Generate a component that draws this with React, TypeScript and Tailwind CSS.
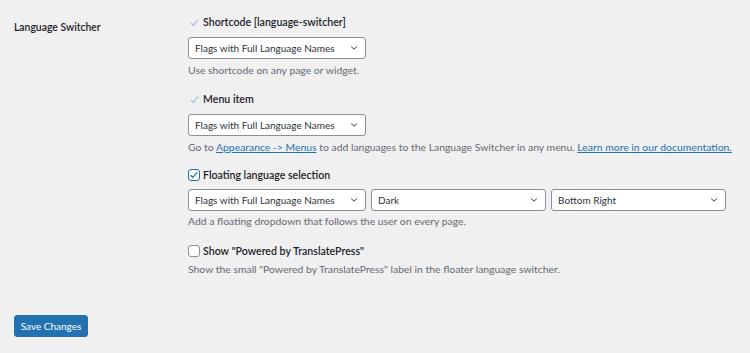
import { ChevronDown } from "lucide-react";

const font = { fontFamily: 'Lato, "Noto Sans", sans-serif' };

function Select({ value, width }: { value: string; width: string }) {
    return (
        <div className={`${width} shrink-0 h-[22px] bg-white border border-[#8c8f94] rounded-[3px] flex items-center justify-between pl-[6px] pr-[6px] text-[10px] text-[#2c3338] whitespace-nowrap`}>
            <span>{value}</span>
            <ChevronDown className="w-[10px] h-[10px] text-[#50575e]" strokeWidth={2.5} />
        </div>
    );
}

function Check({ state }: { state: "disabled" | "checked" | "empty" }) {
    if (state === "disabled") {
        return (
            <span className="w-[12px] h-[12px] flex items-center justify-center">
                <svg viewBox="0 0 12 12" className="w-[11px] h-[11px]">
                    <path d="M2 6.5 L4.6 9.2 L10 2.6" fill="none" stroke="#a7c4de" strokeWidth="1.5" />
                </svg>
            </span>
        );
    }
    return (
        <span className={`w-[12px] h-[12px] rounded-[3px] bg-white border flex items-center justify-center ${state === "checked" ? "border-[#2271b1]" : "border-[#8c8f94]"}`}>
            {state === "checked" && (
                <svg viewBox="0 0 12 12" className="w-[10px] h-[10px]">
                    <path d="M2 6.2 L4.6 8.8 L10 2.8" fill="none" stroke="#2271b1" strokeWidth="1.6" />
                </svg>
            )}
        </span>
    );
}

export default function App() {
    return (
        <div style={font} className="w-[750px] h-[353px] bg-[#f0f0f1] text-[#1d2327] text-[10.4px] leading-[14px] flex flex-col px-[14px] whitespace-nowrap">
            <div className="flex pt-[14px]">
                <div className="w-[174px] shrink-0 pt-[6px] font-semibold">Language Switcher</div>

                <div className="flex flex-col">
                    {/* Shortcode */}
                    <div className="mt-[1px] flex items-center gap-[3px] h-[14px] font-semibold text-[10.6px]">
                        <Check state="disabled" />
                        <span>Shortcode [language-switcher]</span>
                    </div>
                    <div className="mt-[8px]"><Select value="Flags with Full Language Names" width="w-[178px]" /></div>
                    <div className="mt-[4px] text-[#646970]">Use shortcode on any page or widget.</div>

                    {/* Menu item */}
                    <div className="mt-[15px] flex items-center gap-[3px] h-[14px] font-semibold text-[10.6px]">
                        <Check state="disabled" />
                        <span>Menu item</span>
                    </div>
                    <div className="mt-[8px]"><Select value="Flags with Full Language Names" width="w-[178px]" /></div>
                    <div className="mt-[4px] text-[#646970]">
                        Go to <a className="text-[#2271b1] underline">Appearance -&gt; Menus</a> to add languages to the Language Switcher in any menu.{" "}
                        <a className="text-[#2271b1] underline">Learn more in our documentation.</a>
                    </div>

                    {/* Floating */}
                    <div className="mt-[14px] flex items-center gap-[3px] h-[14px] font-semibold text-[10.6px]">
                        <Check state="checked" />
                        <span>Floating language selection</span>
                    </div>
                    <div className="mt-[7px] flex gap-[5px]">
                        <Select value="Flags with Full Language Names" width="w-[178px]" />
                        <Select value="Dark" width="w-[175px]" />
                        <Select value="Bottom Right" width="w-[175px]" />
                    </div>
                    <div className="mt-[3px] text-[#646970]">Add a floating dropdown that follows the user on every page.</div>

                    {/* Powered by */}
                    <div className="mt-[16px] flex items-center gap-[3px] h-[14px] font-semibold text-[10.6px]">
                        <Check state="empty" />
                        <span>Show "Powered by TranslatePress"</span>
                    </div>
                    <div className="mt-[4px] text-[#646970]">Show the small "Powered by TranslatePress" label in the floater language switcher.</div>
                </div>
            </div>

            <div className="mt-[39px]">
                <button className="h-[22px] w-[74px] bg-[#2271b1] border border-[#2271b1] rounded-[3px] text-white text-[10px] leading-[14px]">
                    Save Changes
                </button>
            </div>
        </div>
    );
}
